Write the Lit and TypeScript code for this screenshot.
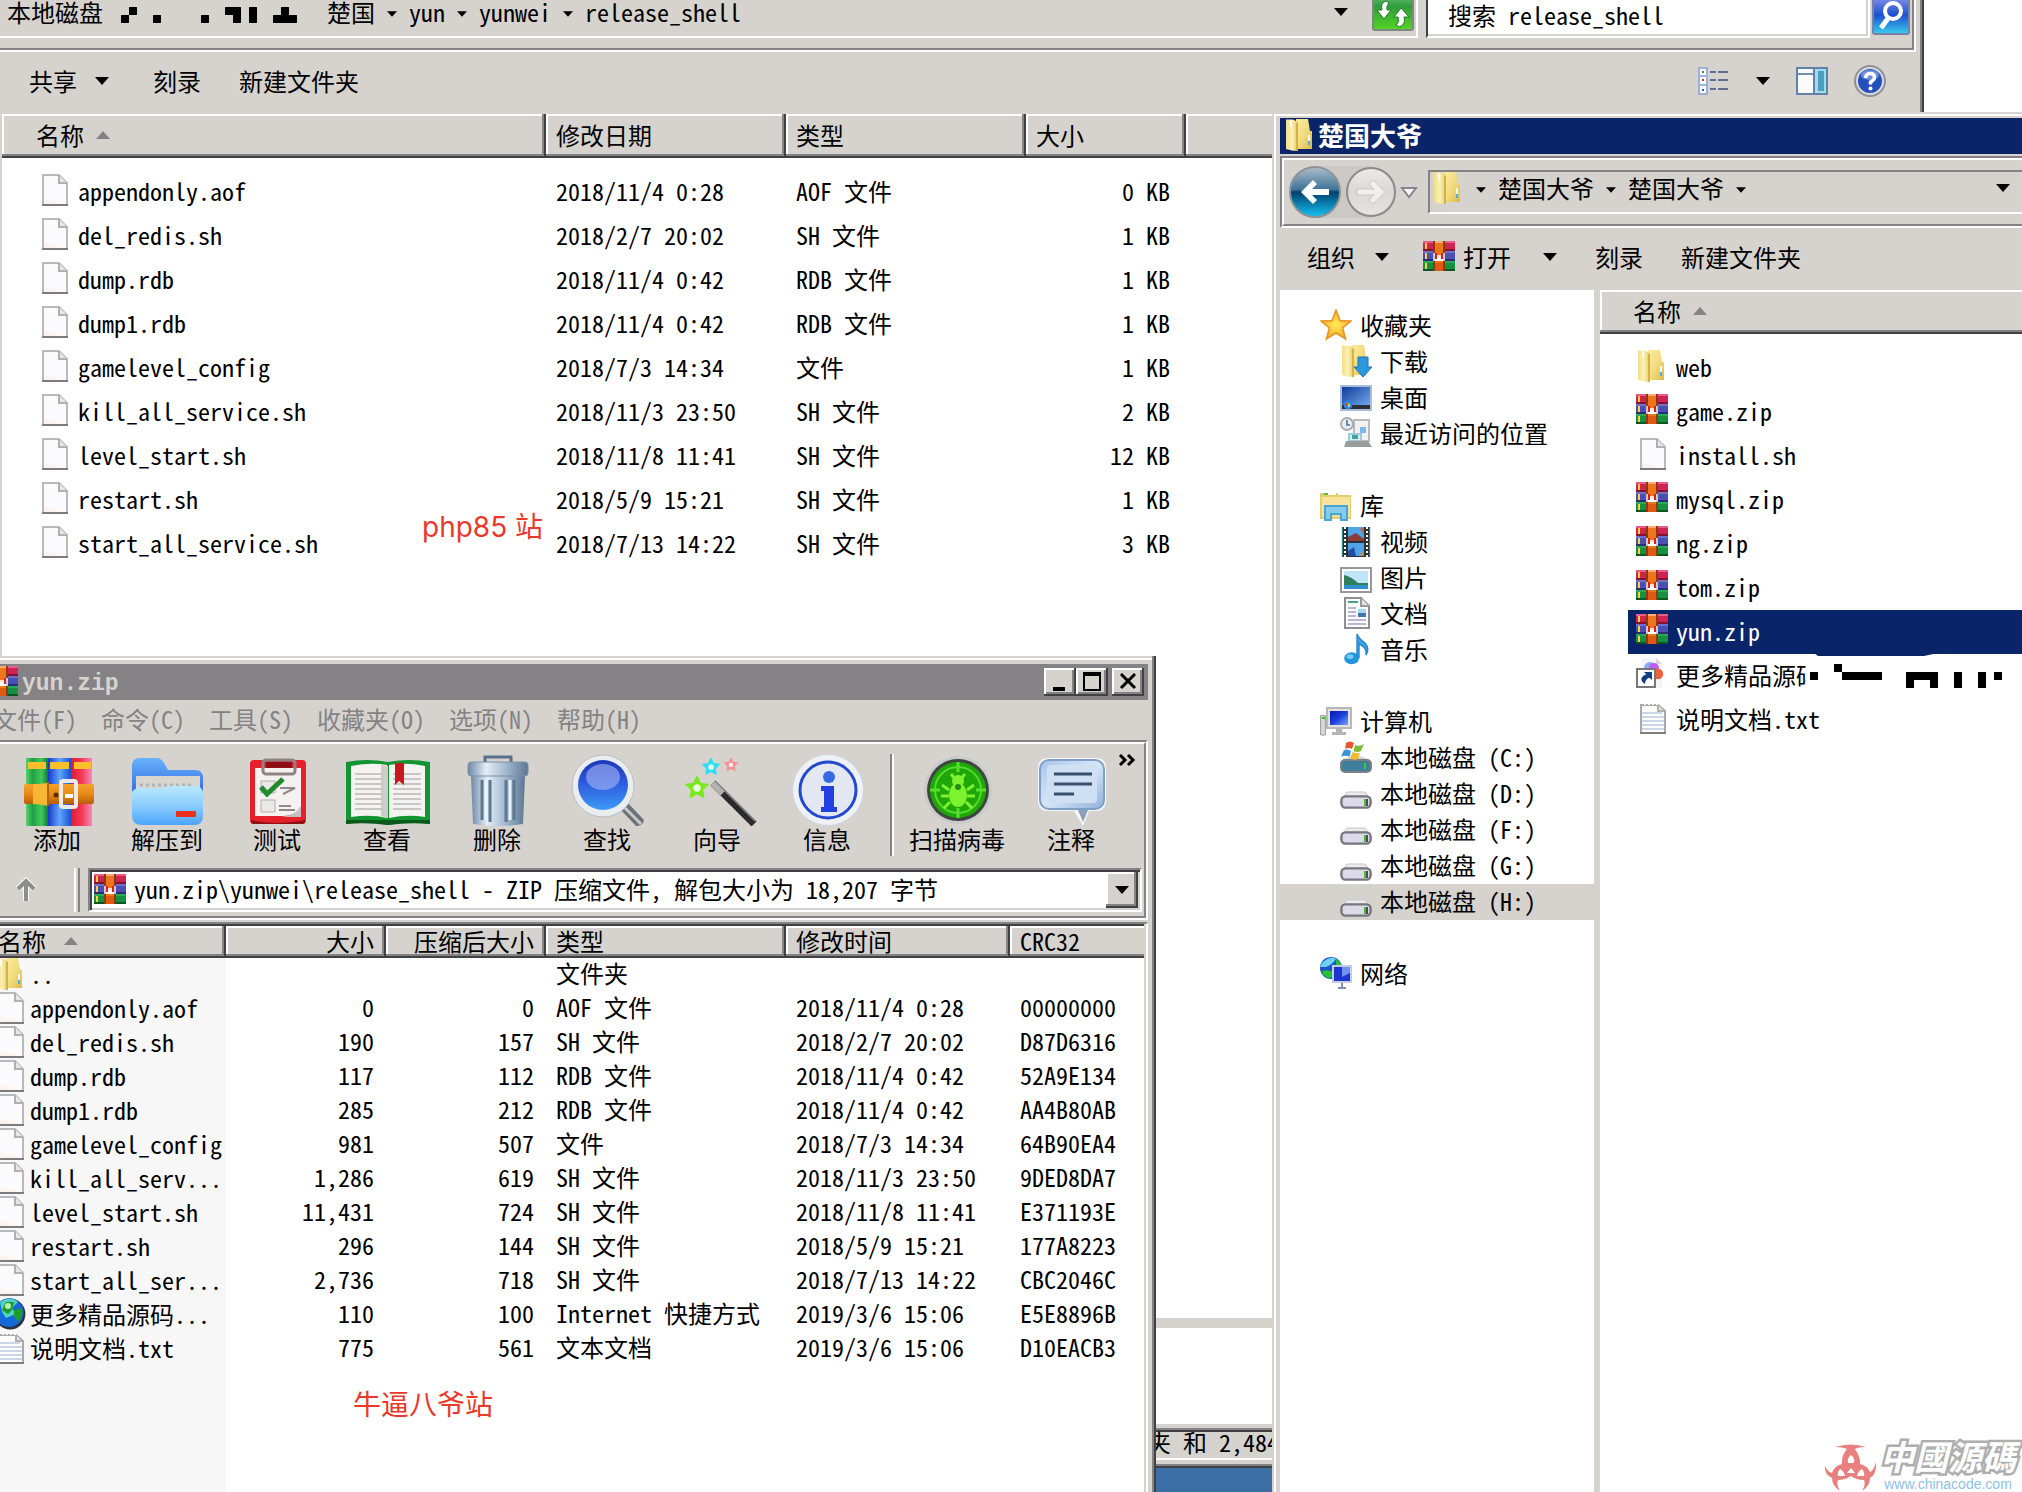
import { LitElement, html, svg, css, nothing } from "lit";
import { customElement } from "lit/decorators.js";
import { classMap } from "lit/directives/class-map.js";

type Art = ReturnType<typeof svg>;

/* ---------- 16-unit icons ---------- */
const page = svg`<path d="M2.5 .5H10.5L14.5 4.5V15.5H2.5Z" fill="#fbfafc" stroke="#b9b9bb"/>
  <path d="M3 12L12 15H3Z" fill="#fdf3ee"/><path d="M10.5 .5V4.5H14.5" fill="#e6e6e8" stroke="#b0b0b3"/><path d="M2 15.5H15" stroke="#7d7d80"/>`;
const icons: Record<string, Art> = {
  page,
  text: svg`<path d="M2.5 1.5H11L14.5 4.5V15.5H2.5Z" fill="#fdfdfb" stroke="#a9a9ab"/>
    <path d="M4 1H11" stroke="#fff" stroke-dasharray="1 1"/><path d="M11 1.5V4.5H14" fill="#e6e6e8" stroke="#b0b0b3"/>
    <path d="M3 5.5H13M3 7.5H14M3 9.5H14M3 11.5H14M3 13.5H14" stroke="#cbd7e9"/><path d="M2 15.5H15" stroke="#7d7d80"/>`,
  folder: svg`<path d="M6 0H12L13 6H14V15H6Z" fill="url(#gFold)"/><path d="M1 .2H4.500L7 1.500V15.900H4.500L1 15Z" fill="url(#gFoldL)"/>
    <path d="M6.500 2V16" stroke="#d3b24a"/><path d="M3.500 .8V4" stroke="#fffdf0"/><path d="M12.500 8V11" stroke="#f4f8fa"/><path d="M12.500 11V13" stroke="#4bb0e6"/>`,
  rar: svg`<g shape-rendering="crispEdges"><path d="M0 0H16V5H0Z" fill="#cf2450"/><path d="M0 0H16V1H0Z" fill="#ea5c8a"/><path d="M0 4H16V5H0Z" fill="#86132e"/>
    <path d="M0 5H16V10H0Z" fill="#4c4fb4"/><path d="M0 5H16V6H0Z" fill="#6c70cc"/><path d="M0 9H16V10H0Z" fill="#2b2c73"/>
    <path d="M0 10H16V15H0Z" fill="#17913f"/><path d="M0 10H16V11H0Z" fill="#27ae55"/><path d="M0 14H16V15H0Z" fill="#0b5525"/>
    <path d="M5 0H11V15H5Z" fill="#8a3a10"/><path d="M6 0H10V15H6Z" fill="#ee7519"/><path d="M6 0H10V1H6Z" fill="#f8ad76"/><path d="M6 11H10V15H6Z" fill="#dc5a12"/>
    <path d="M5 6H6V10H5ZM10 6H11V10H10Z" fill="#cfc9d2"/><path d="M6 8H10V10H6Z" fill="#fff"/><path d="M6 6H7V9H6ZM9 6H10V9H9Z" fill="#cf2318"/><path d="M7 7H9V8H7Z" fill="#fbe3d0"/>
    <path d="M1 1H2V4H1ZM1 6H2V9H1ZM1 11H2V14H1Z" fill="#ffd33a"/></g>`,
  link: svg`<path d="M3 0H10L13 3V15H3Z" fill="#f4f4f8"/><path d="M10 0V3H13" fill="#d3d3d8"/><circle cx="7" cy="5" r="3" fill="#8aa9f4"/><circle cx="9" cy="5" r="2.5" fill="#c45cf0"/>
    <circle cx="11" cy="8" r="2.6" fill="#f2603c"/><path d="M.5 5.5H9.5V14.5H.5Z" fill="#fff" stroke="#77777a"/>
    <path d="M4 7H8V11L6.800 9.900Q4.500 10.500 4.500 13Q2.500 12 2.700 10.300Q3.200 8.600 5.200 8.200Z" fill="#0f3f82"/>`,
  star: svg`<path d="M8 .5L10 5.800L15.500 6L11.300 9.500L12.800 15L8 12L3.200 15L4.700 9.500L.5 6L6 5.800Z" fill="url(#gStar)" stroke="#e7962e" stroke-width=".8"/>`,
  download: svg`<path d="M6 0H12L13 6V15H6Z" fill="url(#gFold)"/><path d="M1 .2H4.500L7 1.500V15.900H4.500L1 15Z" fill="url(#gFoldL)"/><path d="M6.500 2V16" stroke="#d3b24a"/>
    <path d="M9 6H14V11H16L11.500 16L7 11H9Z" fill="#2c97dc" stroke="#1b77bd" stroke-width=".5"/>`,
  desktop: svg`<path d="M0 2H16V15H0Z" fill="#a9bddb"/><path d="M1 3H15V14H1Z" fill="url(#gDesk)"/><path d="M1 12H15V14H1Z" fill="#2c3138"/><circle cx="4" cy="12" r="2.200" fill="#2f86e0"/>
    <path d="M3 11H4V12H3Z" fill="#f04a2a"/><path d="M4 11H5V12H4Z" fill="#7fce3f"/><path d="M4 12H5V13H4Z" fill="#fbd13c"/>`,
  recent: svg`<path d="M7 1.500H14.500V12H7Z" fill="#f2f2f4" stroke="#b9babd"/><path d="M10 5H13V8H10Z" fill="#79b9ee"/><path d="M4.500 8.500H10.500V12H4.500Z" fill="#d5eef3" stroke="#9ccada"/><path d="M6 9H9V11H6Z" fill="#3aa5a0"/>
    <path d="M3 12H14L16 15H2Z" fill="#9b9c9e"/><circle cx="3.500" cy="3.500" r="3" fill="#e9eef4" stroke="#a9adb3"/><path d="M3.500 1.500V4H5" stroke="#55708f" stroke-width=".8" fill="none"/>`,
  library: svg`<path d="M0 2H9V3H15.500V15H0Z" fill="#e7cc6c"/><path d="M1 4H15V14H1Z" fill="#f6e49c"/><path d="M4 2.500H8" stroke="#fff"/><path d="M2 2.500H4" stroke="#54c52f"/>
    <path d="M2.500 8.500H13.500V15.500H10.500V12.500H5.500V15.500H2.500Z" fill="#86cbec" stroke="#49a5d3"/>`,
  video: svg`<path d="M1 1H15V16H1Z" fill="#2a3236"/><path d="M4 1H12V8H4ZM4 9H12V15.500H4Z" fill="#4fa5e8"/><path d="M4 6L8 4L12 7V8H4Z" fill="#8c3b3b"/><path d="M10 2L12 1V5Z" fill="#c7653c"/>
    <path d="M4 15.500V13L7 11L8 15.500Z" fill="#244f9e"/><path d="M10 15.500L12 12V15.500Z" fill="#d18a3c"/><path d="M2.500 1V16M13.500 1V16" stroke="#fff" stroke-dasharray="1 1"/><path d="M1.200 1V16M14.800 1V16" stroke="#3a7e86" stroke-width=".6"/>`,
  picture: svg`<path d="M.5 3.500H15.500V15.500H.5Z" fill="#fff" stroke="#97989b"/><path d="M2 5H14V14H2Z" fill="#bfe4fa"/><path d="M2 7Q6 8 9 11H14V12H2Z" fill="#2e7f5c"/><path d="M2 12H14V14H2Z" fill="#2f8fce"/>`,
  doc: svg`<path d="M2.500 .5H10.500L14.500 4.500V15.500H2.500Z" fill="#fdfdfe" stroke="#8e8f92"/><path d="M10.500 .5V4.500H14.500" fill="#e4e4e6" stroke="#9a9a9d"/><path d="M4 2.500H9" stroke="#4d9c9c"/>
    <path d="M4 5.500H8M4 7.500H8M4 9.500H8M4 11.500H13M4 13.500H13" stroke="#b9b5d6"/><path d="M9 6H13V10H9Z" fill="#3f78b4"/><path d="M9 6H13V8H9Z" fill="#a5d6ef"/>`,
  music: svg`<path d="M8.500 12V.5Q9.500 3 12.500 5Q15 8 13 11Q13.500 7 9.500 5.500V12.500" fill="#3fa2e3" stroke="#2487cc" stroke-width=".7"/><ellipse cx="5.800" cy="12.600" rx="3.700" ry="3" fill="#2196dc"/><ellipse cx="5" cy="11.800" rx="1.800" ry="1.200" fill="#7cc6f0"/>`,
  computer: svg`<path d="M.3 5.300H2.700V15H.3Z" fill="#d8d8d8" stroke="#9a9a9a" stroke-width=".5"/><path d="M1 6.500H2.500" stroke="#39c522"/><path d="M3.500 1.500H15.500V11.500H3.500Z" fill="#e2e2e2" stroke="#b8b8b8"/>
    <path d="M5 3H14V10H5Z" fill="url(#gScreen)"/><path d="M8 12H11V13.500H13V15H6V13.500H8Z" fill="#b5b5b5"/>`,
  winDrive: svg`<path d="M2 9Q8 6 14 9L16 11H0Z" fill="#cfd4d8"/><rect x=".5" y="9.500" width="15" height="6" rx="2" fill="#3f7f9e" stroke="#7d8085"/><path d="M12.500 11V14" stroke="#46d025"/>
    <path d="M3 1Q5-.5 7 1L6 4Q4 3 2.500 4Z" fill="#e8552a"/><path d="M7.500 2Q10 3 12 1.500L10.500 5Q8.500 6 6.800 5Z" fill="#7fbd3a"/><path d="M2 4.500Q4 3.800 5.500 5L4.800 7.800Q3 7 .5 7.800Z" fill="#3c93dd"/><path d="M6.300 5.500Q8 6.500 10 6L9 9Q7 10 5 8.500Z" fill="#f5bb2e"/>`,
  drive: svg`<path d="M3.500 7.500H12.500L15 11H1Z" fill="#ebebee" stroke="#c7c7cb" stroke-width=".5"/><rect x=".7" y="9.700" width="14.600" height="5.600" rx="2" fill="#dbdae8" stroke="#77757c" stroke-width="1.200"/>
    <path d="M12 11H13V14.500H12Z" fill="#3fc421"/><path d="M13 11H14V14.500H13Z" fill="#4d4b58"/>`,
  network: svg`<circle cx="5.500" cy="5.500" r="5.500" fill="#1a54cf"/><path d="M1 3Q5-1 8 1Q6 4 3 5Q1 5 0 5Z" fill="#6fd2f5"/><path d="M1 7Q5 6 7 8Q6 11 4 10.500Q1 9 1 7ZM8 1Q11 3 10.500 5L8 4Z" fill="#27c22f"/>
    <path d="M6.500 4.500H15.500V12.500H6.500Z" fill="#1e35d0" stroke="#c6cbe0"/><path d="M11 5H15V8L11 10Z" fill="#6e91f2"/><path d="M11 13V15M9 15.500H13" stroke="#7f8fb3"/>`,
  globe: svg`<circle cx="8" cy="8" r="7.700" fill="#2f2f38"/><circle cx="7.600" cy="7.300" r="7.200" fill="#1468d8"/><path d="M3 2Q8-1.500 12 2L9 5L11 8L6 10L4 7Z" fill="#4fd0c0"/><path d="M6 2H10L9 6L7 8L4 6ZM10 6L14 5Q15 9 12 12L10 9Z" fill="#1c9c2a"/><circle cx="7" cy="4" r="1.500" fill="#baf0b0"/>`,
};
const ico = (name: string) => html`<svg class="ico" viewBox="0 0 16 16" aria-hidden="true">${icons[name]}</svg>`;

const tri = (small = false) =>
  html`<svg class=${small ? "tri small" : "tri"} viewBox="0 0 14 8" aria-hidden="true"><path d="M0 0H14L7 8Z"/></svg>`;
const sortMark = html`<svg class="tri sort" viewBox="0 0 14 8" aria-hidden="true"><path d="M0 8H14L7 0Z"/></svg>`;

/* ---------- archive toolbar pictures ---------- */
const starAt = (x: number, y: number, r: number, fill: string) => {
  const pts = Array.from({ length: 10 }, (_, i) => {
    const a = (Math.PI / 5) * i - Math.PI / 2;
    const q = i % 2 ? r * 0.5 : r;
    return `${(x + q * Math.cos(a)).toFixed(1)},${(y + q * Math.sin(a)).toFixed(1)}`;
  }).join(" ");
  return svg`<polygon points=${pts} fill=${fill}/><circle cx=${x} cy=${y} r=${r / 3.5} fill="#fff" opacity=".85"/>`;
};
const tools: { label: string; art: Art; wide?: boolean }[] = [
  { label: "添加", art: svg`<path d="M13 4H35V72H13Z" fill="url(#gGreen)"/><path d="M35 4H58V72H35Z" fill="url(#gBlue)"/><path d="M58 4H79V72H58Z" fill="url(#gRed)"/>
    <path d="M15 8H33V15H15ZM37 8H56V15H37ZM61 8H78V15H61Z" fill="#fcbf2c"/><rect x="11" y="30" width="70" height="20" rx="2" fill="url(#gBelt)"/>
    <path d="M20 30Q32 30 36 28V52Q26 50 20 50Z" fill="#f7b733"/><path d="M35 28V52" stroke="#b5640c" stroke-width="2"/><rect x="48" y="27" width="15" height="26" rx="2" fill="none" stroke="#ece9e6" stroke-width="4"/><path d="M52 42H60" stroke="#fff" stroke-width="4"/><circle cx="43" cy="41" r="2.500" fill="#5c2a05"/>` },
  { label: "解压到", art: svg`<path d="M9 12Q9 4 17 4H34Q38 4 41 9L45 16H72Q80 16 80 24V44H9Z" fill="url(#gFoldBlue)"/><path d="M13 22H77V44H13Z" fill="#d8d5d0"/><path d="M17 31H70" stroke="#aeb4ba" stroke-width="3" stroke-dasharray="3 3"/>
    <path d="M9 38Q11 34 18 34H40L46 32H72Q80 32 80 40V62Q80 71 71 71H19Q9 71 9 62Z" fill="url(#gFoldFront)"/><rect x="53" y="57" width="20" height="6" rx="1" fill="#e8301a"/>` },
  { label: "测试", art: svg`<rect x="17" y="6" width="56" height="64" rx="4" fill="#e5202a"/><path d="M18 66Q45 72 72 66V68Q72 70 68 70H22Q18 70 18 68Z" fill="#8e1015"/><path d="M22 14H68V54Q62 62 50 62H22Z" fill="#f4f2f1"/>
    <path d="M68 52Q60 64 46 63H68Z" fill="#c5c1bf"/><path d="M33 11H59" stroke="#8e1015" stroke-width="6"/><rect x="30" y="6" width="32" height="14" rx="3" fill="none" stroke="#8d8284" stroke-width="3"/>
    <path d="M28 27H42V39H28ZM28 46H42V58H28Z" fill="#ece8e6" stroke="#b2adab"/><path d="M28 33L34 40L50 25" fill="none" stroke="#1f8b2b" stroke-width="5"/><path d="M47 34H62L50 40M46 52H58M46 56H62" fill="none" stroke="#93888c" stroke-width="2"/>` },
  { label: "查看", art: svg`<path d="M3 8Q24 4 45 8Q66 4 87 8V70Q66 67 45 71Q24 67 3 70Z" fill="#129433"/><path d="M3 66H87V70Q66 68 45 71Q24 68 3 70Z" fill="#075a18"/><path d="M8 12Q28 8 44 11V64Q28 60 8 63Z" fill="#f5f3f1"/><path d="M46 11Q64 8 82 12V63Q64 60 46 64Z" fill="#f5f3f1"/>
    <path d="M38 11L45 12V64L38 62Z" fill="#cfccca"/><path d="M12 20H40M12 25H40M12 30H40M12 35H40M12 40H40M12 45H40M12 50H40M12 55H40M50 20H78M50 25H78M50 30H78M50 35H78M50 40H78M50 45H78M50 50H78M50 55H78" stroke="#c9c5c3" stroke-width="2"/><path d="M52 9H61V31L56 27L52 31Z" fill="#c8171d"/>` },
  { label: "删除", art: svg`<path d="M32 8V3H58V8" fill="none" stroke="#5a6f89" stroke-width="3"/><path d="M18 22H72L70 70Q45 74 20 70Z" fill="url(#gSteel)"/><path d="M29 26V66M37 26V68M53 26V68M61 26V66" stroke="#5d7893" stroke-width="3"/><path d="M33 26V66M57 26V66" stroke="#e9f1f8" stroke-width="3"/><rect x="15" y="8" width="60" height="14" rx="3" fill="url(#gSteel)" stroke="#7a90a8"/>` },
  { label: "查找", art: svg`<path d="M56 54L64 48L81 66Q80 72 73 72Z" fill="#6e7278"/><path d="M62 54L78 70" stroke="#c6c9ce" stroke-width="3"/><circle cx="40" cy="32" r="31" fill="#e9edf0" stroke="#b7bcc0"/><circle cx="40" cy="31" r="25" fill="url(#gLens)"/><ellipse cx="40" cy="23" rx="17" ry="13" fill="#a9b8f6" opacity=".6"/>` },
  { label: "向导", art: svg`<path d="M40 29L81 70" stroke="#2b2b2e" stroke-width="7"/><path d="M40 29L50 39" stroke="#b3b1af" stroke-width="7"/><path d="M42 27L82 67" stroke="#8b8b8e" stroke-width="1.500"/>${starAt(24, 34, 13, "#7ae81a")}${starAt(38, 13, 10, "#29e0f2")}${starAt(58, 11, 8, "#f79090")}` },
  { label: "信息", art: svg`<circle cx="45" cy="36" r="35.500" fill="#eef1f6" stroke="#cfd5de"/><circle cx="45" cy="36" r="28" fill="#e3e7f1" stroke="#2448cf" stroke-width="3"/><circle cx="46" cy="23" r="6" fill="#3568e4"/><path d="M38 32H51V53H54V58H38V53H41V37H38Z" fill="#2341e0"/>` },
  { label: "扫描病毒", wide: true, art: svg`<circle cx="45" cy="36" r="34" fill="#c9cacb"/><circle cx="45" cy="36" r="31" fill="#3f4541"/><circle cx="45" cy="36" r="28" fill="#1fa707"/><circle cx="45" cy="36" r="23" fill="none" stroke="#55d92e" stroke-width="2"/>
    <path d="M45 8V18M45 54V64M17 36H27M63 36H73" stroke="#55e02c" stroke-width="3"/><ellipse cx="45" cy="41" rx="9" ry="12" fill="#7df22f"/><circle cx="45" cy="27" r="6" fill="#7df22f"/><path d="M38 20L42 25M52 20L48 25M36 36L29 31M54 36L61 31M36 42H28M54 42H62M37 48L31 54M53 48L59 54" stroke="#7df22f" stroke-width="3"/><circle cx="45" cy="33" r="3" fill="#238c10"/>` },
  { label: "注释", art: svg`<path d="M21 4H69Q79 4 79 14V46Q79 57 69 57H62L56 72L47 57H21Q11 57 11 46V14Q11 4 21 4Z" fill="#f4f7fa"/><rect x="13" y="6" width="64" height="49" rx="9" fill="url(#gNote)" stroke="#7f9fc6" stroke-width="2"/><path d="M51 56L56 68L61 56Z" fill="#8ba0b8"/><rect x="20" y="11" width="50" height="38" rx="4" fill="#cfdff4"/><path d="M27 20H65M27 30H65M27 40H47" stroke="#38506e" stroke-width="3"/>` },
];

/* ---------- data ---------- */
const files = [
  ["appendonly.aof", "2018/11/4 0:28", "AOF 文件", "0 KB"],
  ["del_redis.sh", "2018/2/7 20:02", "SH 文件", "1 KB"],
  ["dump.rdb", "2018/11/4 0:42", "RDB 文件", "1 KB"],
  ["dump1.rdb", "2018/11/4 0:42", "RDB 文件", "1 KB"],
  ["gamelevel_config", "2018/7/3 14:34", "文件", "1 KB"],
  ["kill_all_service.sh", "2018/11/3 23:50", "SH 文件", "2 KB"],
  ["level_start.sh", "2018/11/8 11:41", "SH 文件", "12 KB"],
  ["restart.sh", "2018/5/9 15:21", "SH 文件", "1 KB"],
  ["start_all_service.sh", "2018/7/13 14:22", "SH 文件", "3 KB"],
];
const archive = [
  ["folder", "..", "", "", "文件夹", "", ""],
  ["page", "appendonly.aof", "0", "0", "AOF 文件", "2018/11/4 0:28", "00000000"],
  ["page", "del_redis.sh", "190", "157", "SH 文件", "2018/2/7 20:02", "D87D6316"],
  ["page", "dump.rdb", "117", "112", "RDB 文件", "2018/11/4 0:42", "52A9E134"],
  ["page", "dump1.rdb", "285", "212", "RDB 文件", "2018/11/4 0:42", "AA4B80AB"],
  ["page", "gamelevel_config", "981", "507", "文件", "2018/7/3 14:34", "64B90EA4"],
  ["page", "kill_all_serv...", "1,286", "619", "SH 文件", "2018/11/3 23:50", "9DED8DA7"],
  ["page", "level_start.sh", "11,431", "724", "SH 文件", "2018/11/8 11:41", "E371193E"],
  ["page", "restart.sh", "296", "144", "SH 文件", "2018/5/9 15:21", "177A8223"],
  ["page", "start_all_ser...", "2,736", "718", "SH 文件", "2018/7/13 14:22", "CBC2046C"],
  ["globe", "更多精品源码...", "110", "100", "Internet 快捷方式", "2019/3/6 15:06", "E5E8896B"],
  ["text", "说明文档.txt", "775", "561", "文本文档", "2019/3/6 15:06", "D10EACB3"],
];
const groups: { icon: string; label: string; items: [string, string][] }[] = [
  { icon: "star", label: "收藏夹", items: [["download", "下载"], ["desktop", "桌面"], ["recent", "最近访问的位置"]] },
  { icon: "library", label: "库", items: [["video", "视频"], ["picture", "图片"], ["doc", "文档"], ["music", "音乐"]] },
  { icon: "computer", label: "计算机", items: [["winDrive", "本地磁盘 (C:)"], ["drive", "本地磁盘 (D:)"], ["drive", "本地磁盘 (F:)"], ["drive", "本地磁盘 (G:)"], ["drive", "本地磁盘 (H:)"]] },
  { icon: "network", label: "网络", items: [] },
];
const folderList = [
  ["folder", "web"], ["rar", "game.zip"], ["page", "install.sh"], ["rar", "mysql.zip"], ["rar", "ng.zip"],
  ["rar", "tom.zip"], ["rar", "yun.zip"], ["link", "更多精品源码"], ["text", "说明文档.txt"],
];

@customElement("app-root")
export class AppRoot extends LitElement {
  static styles = css`
    :host {
      display: block; position: relative; height: 100vh; overflow: hidden;
      background: linear-gradient(#fff 0 calc(100% - 24px), #3a6ea5 0);
      font: 24px/28px "Noto Sans CJK SC", "Liberation Mono", monospace;
      font-feature-settings: "hwid" 1; font-variant-ligatures: none;
      color: #000; --face: #d6d3ce; --mid: #848284; --dark: #424142; --navy: #0a246a;
    }
    * { box-sizing: border-box; }
    button, input, select { font: inherit; font-feature-settings: inherit; font-variant-ligatures: none; color: inherit; background: none; border: 0; padding: 0; margin: 0; border-radius: 0; white-space: nowrap; outline: 0; }
    a { color: inherit; text-decoration: none; }
    svg { display: block; flex: none; }
    .defs { position: absolute; width: 0; height: 0; }
    .ico { width: 32px; height: 32px; }
    .tri { width: 14px; height: 8px; }
    .tri.small { width: 10px; height: 6px; margin-top: 4px; }
    .tri.sort { fill: var(--mid); }
    .win { position: absolute; background: var(--face); display: flex; flex-direction: column; overflow: hidden; }
    .etch { flex: none; border: 2px solid; border-color: var(--mid) #fff #fff var(--mid); }
    .etchIn { border: 2px solid; border-color: #fff var(--mid) var(--mid) #fff; }

    table { border-collapse: separate; border-spacing: 0; table-layout: fixed; width: 100%; }
    th, td { padding: 0 12px 0 10px; text-align: left; font-weight: 400; white-space: nowrap; }
    th { background: var(--face); box-shadow: inset -2px -2px var(--dark), inset -4px -4px var(--mid), inset 2px 2px #fff; }
    th.last { box-shadow: inset 0 -2px var(--dark), inset 0 -4px var(--mid), inset 2px 2px #fff; }
    .num { text-align: right; }
    .cell { display: flex; align-items: center; }
    .files th { height: 44px; padding-bottom: 2px; }
    .files td { height: 44px; padding-bottom: 2px; }
    .files td:first-child { padding-bottom: 0; }
    .files .cell { gap: 8px; height: 44px; padding-bottom: 2px; }
    .files .cell .ico { margin-bottom: 2px; }
    .files th:first-child .cell { gap: 12px; height: 40px; padding-bottom: 0; }
    .files .spacer td { height: 12px; padding: 0; }

    .nav { display: flex; align-items: center; height: 68px; }
    .crumbs { flex: 1; display: flex; align-items: center; height: 44px; border: 2px solid; border-color: var(--mid) #fff #fff var(--mid); padding-bottom: 8px; min-width: 0; }
    .step { width: 34px; display: flex; justify-content: center; }
    .push { margin-left: auto; }
    .bar { flex: none; display: flex; align-items: center; height: 62px; padding-bottom: 4px; }
    .bar button { display: flex; align-items: center; }

    .back { left: 0; right: 98px; top: -20px; bottom: 24px; padding-right: 8px; box-shadow: inset -2px -2px var(--dark), inset -4px -4px var(--mid); }
    .back .etch, .back .etchIn { border-left: 0; }
    .back .nav { gap: 8px; padding-right: 2px; }
    .back .crumbs { border-left: 0; padding-left: 7px; }
    .back .refresh { margin: 0 2px 0 24px; }
    .search { display: flex; align-items: center; flex: none; width: 484px; height: 44px; }
    .search input { flex: 1; min-width: 0; height: 44px; background: #fff; border: 2px solid; border-color: var(--mid) #fff #fff var(--dark); box-shadow: inset -2px -2px var(--face); padding: 0 20px 4px; }
    .search button { width: 40px; padding-left: 2px; }
    .back .bar { padding: 0 30px 4px 29px; gap: 38px; }
    .back .bar .share { gap: 18px; margin-right: 6px; }
    .back .bar .icons { display: flex; align-items: center; margin-left: auto; gap: 26px; }
    .backBody { flex: 1; background: #fff; border-left: 2px solid var(--face); min-height: 0; overflow: hidden; }
    .back .files th:first-child { padding-left: 34px; }
    .back .files td:first-child { padding-left: 36px; }
    .back .files .num { padding-right: 16px; }
    .split { flex: none; height: 10px; }
    .details { flex: none; height: 96px; background: #fff; }
    .status { flex: none; margin: 4px 0; border-top: 2px solid var(--mid); border-bottom: 2px solid #fff; box-shadow: inset 0 2px var(--dark); height: 32px; padding-left: 1147px; white-space: nowrap; line-height: 24px; }
    .foot { flex: none; height: 4px; }

    .front { left: 1272px; right: 0; top: 112px; bottom: 0; padding: 6px 0 0 8px; box-shadow: inset 2px 2px var(--face), inset 4px 4px #fff; }
    .front .title { flex: none; display: flex; align-items: center; gap: 2px; height: 36px; margin-bottom: 2px; padding: 0 0 2px 4px; background: var(--navy); color: #fff; font-weight: 700; font-size: 26px; }
    .front .etch, .front .etchIn { border-right: 0; }
    .front .nav { padding-left: 4px; }
    .front .crumbs { border-right: 0; margin-left: 10px; padding-left: 2px; }
    .front .push { margin-right: 12px; }
    .front .bar { padding-left: 27px; }
    .front .bar button { gap: 20px; }
    .front .bar .open { gap: 8px; margin-left: 34px; }
    .front .bar .more { margin-left: 32px; }
    .front .bar .burn { margin: 0 38px; }
    .panes { flex: 1; display: flex; min-height: 0; }
    .tree { flex: none; width: 314px; background: #fff; padding-top: 18px; }
    .tree ul { list-style: none; margin: 0 0 36px; padding: 0; }
    .tree a { display: flex; align-items: center; gap: 8px; height: 36px; padding: 0 0 2px 40px; }
    .tree .sub a { padding-left: 60px; }
    .tree .sub.sel a { background: var(--face); }
    .list { flex: 1; min-width: 0; margin-left: 6px; background: #fff; overflow: hidden; }
    .list th:first-child { padding-left: 33px; }
    .list th .cell { padding-left: 0; }
    .list td { padding: 0 0 0 28px; }
    .list td .cell { padding-left: 8px; }
    .list .sel .cell { background: var(--navy); color: #fff; }
    .clip { width: 130px; overflow: hidden; }
    .clip + svg { margin-left: -12px; }

    .rar { left: -14px; top: 656px; bottom: 0; width: 1170px; padding: 8px 8px 0 0; box-shadow: inset -2px 0 var(--dark), inset -4px 0 var(--mid), inset 0 2px var(--face), inset 0 4px #fff; }
    .rar .title { flex: none; display: flex; align-items: center; gap: 4px; height: 36px; background: var(--mid); color: var(--face); font: 700 23px/28px "Liberation Mono", monospace; padding-right: 4px; }
    .rar .title span { padding-top: 4px; }
    .caps { display: flex; margin-left: auto; }
    .caps button { width: 32px; height: 28px; background: var(--face); box-shadow: inset -2px -2px var(--dark), inset 2px 2px #fff, inset -4px -4px var(--mid); }
    .caps button:last-child { margin-left: 4px; }
    .menu { flex: none; display: flex; align-items: center; gap: 24px; height: 40px; padding: 0 0 2px 7px; color: var(--mid); }
    .rar .etch, .rar .etchIn { border-left: 0; }
    .tools { display: flex; align-items: flex-start; height: 120px; padding: 10px 0 0 16px; }
    .tools button { flex: none; width: 110px; display: flex; flex-direction: column; align-items: center; line-height: 26px; }
    .tools .wide { width: 118px; margin-left: 4px; }
    .tools i { flex: none; width: 4px; height: 102px; margin: 0 0 0 8px; background: linear-gradient(to right, var(--mid) 50%, #fff 50%); }
    .tools .chev { width: 18px; margin-left: -8px; }
    .path { display: flex; align-items: center; height: 52px; padding-right: 2px; }
    .path .up { padding-left: 28px; }
    .grip { width: 6px; height: 44px; margin: 0 8px 0 36px; background: linear-gradient(to right, #fff 2px, var(--face) 2px 4px, var(--mid) 4px); }
    .combo { flex: 1; display: flex; align-items: center; height: 44px; background: #fff; border: 2px solid; border-color: var(--mid) #fff #fff var(--mid); box-shadow: inset 2px 2px var(--dark), inset -2px -2px var(--face); position: relative; padding-left: 4px; }
    .combo select { flex: 1; appearance: none; padding: 0 0 2px 8px; height: 36px; }
    .combo .drop { position: absolute; right: 2px; top: 2px; width: 32px; height: 36px; background: var(--face); box-shadow: inset -2px -2px var(--dark), inset -4px -4px var(--mid), inset 2px 2px #fff; display: grid; place-items: center; pointer-events: none; }
    .grid { flex: 1; min-height: 0; margin-top: 2px; border-top: 2px solid var(--mid); border-right: 2px solid #fff; box-shadow: inset -2px 0 var(--face); padding-right: 2px; background: linear-gradient(to right, #f7f7f7 240px, #fff 240px); }
    .grid table { border-top: 2px solid var(--dark); }
    .grid th { height: 32px; padding-bottom: 2px; }
    .grid td { height: 34px; padding-bottom: 4px; }
    .grid th:first-child { padding-left: 12px; }
    .grid td:first-child { padding: 0 0 0 8px; }
    .grid td .cell { gap: 4px; height: 34px; padding-bottom: 2px; }
    .grid th .cell { gap: 18px; }

    .note { position: absolute; color: #e8392b; font-size: 28px; line-height: 32px; font-family: Inter, "Noto Sans CJK SC", sans-serif; font-feature-settings: normal; white-space: nowrap; }
    .noteA { left: 422px; top: 511px; }
    .noteB { left: 353px; top: 1389px; }
    .mark { position: absolute; right: 6px; bottom: 0; display: flex; align-items: flex-end; gap: 2px; }
    .mark b { display: block; font: italic 700 34px/40px "Noto Sans CJK TC", sans-serif; color: #fff; -webkit-text-stroke: 5px #aeaeae; paint-order: stroke fill; }
    .mark span { display: block; font: 14px/16px "Liberation Sans", sans-serif; color: #8fc0e6; text-align: center; }
  `;

  private defs() {
    return html`<svg class="defs" aria-hidden="true"><defs>
      <linearGradient id="gFold" x2="1" y2="1"><stop stop-color="#fbeb9e"/><stop offset=".5" stop-color="#f3dc80"/><stop offset="1" stop-color="#dcba48"/></linearGradient>
      <linearGradient id="gFoldL" x2="1"><stop stop-color="#f2df87"/><stop offset=".5" stop-color="#fbf0b4"/><stop offset="1" stop-color="#e3c763"/></linearGradient>
      <radialGradient id="gStar"><stop stop-color="#ffee58"/><stop offset="1" stop-color="#f9a825"/></radialGradient>
      <linearGradient id="gDesk" x2="1" y2="1"><stop stop-color="#0f3a9a"/><stop offset="1" stop-color="#7cb2f0"/></linearGradient>
      <linearGradient id="gScreen" x2="1" y2="1"><stop stop-color="#0a14a8"/><stop offset=".5" stop-color="#1c3fe0"/><stop offset="1" stop-color="#7da4f4"/></linearGradient>
      <linearGradient id="gGreen"><stop stop-color="#56d36a"/><stop offset=".3" stop-color="#22a043"/><stop offset=".7" stop-color="#3fc95d"/><stop offset="1" stop-color="#157a2c"/></linearGradient>
      <linearGradient id="gBlue"><stop stop-color="#1738c9"/><stop offset=".5" stop-color="#5fa5fb"/><stop offset="1" stop-color="#1b4fd6"/></linearGradient>
      <linearGradient id="gRed"><stop stop-color="#e01a35"/><stop offset=".5" stop-color="#f23a52"/><stop offset="1" stop-color="#fb86bb"/></linearGradient>
      <linearGradient id="gBelt" x2="0" y2="1"><stop stop-color="#f2a129"/><stop offset=".5" stop-color="#e98a17"/><stop offset="1" stop-color="#b85d08"/></linearGradient>
      <linearGradient id="gFoldBlue" x2="0" y2="1"><stop stop-color="#68b2fb"/><stop offset="1" stop-color="#2e62e0"/></linearGradient>
      <linearGradient id="gFoldFront" x2="0" y2="1"><stop stop-color="#b9e8fd"/><stop offset=".5" stop-color="#8ccdfd"/><stop offset="1" stop-color="#4ba5fb"/></linearGradient>
      <linearGradient id="gSteel"><stop stop-color="#6e88a5"/><stop offset=".3" stop-color="#e3edf6"/><stop offset=".6" stop-color="#a9bed3"/><stop offset="1" stop-color="#5d7793"/></linearGradient>
      <linearGradient id="gLens" x2="0" y2="1"><stop stop-color="#1c36b8"/><stop offset=".5" stop-color="#2f5fe0"/><stop offset="1" stop-color="#3d9af5"/></linearGradient>
      <linearGradient id="gNote" x2="1" y2="1"><stop stop-color="#a9c5ea"/><stop offset=".5" stop-color="#d7e6f8"/><stop offset="1" stop-color="#8fb0da"/></linearGradient>
      <linearGradient id="gBack" x2="0" y2="1"><stop stop-color="#aebecb"/><stop offset=".45" stop-color="#3f7398"/><stop offset=".5" stop-color="#04406e"/><stop offset="1" stop-color="#13c4f4"/></linearGradient>
      <linearGradient id="gFwd" x2="0" y2="1"><stop stop-color="#eceae9"/><stop offset=".5" stop-color="#dad7d5"/><stop offset="1" stop-color="#e6e3e1"/></linearGradient>
      <linearGradient id="gGo" x2="0" y2="1"><stop stop-color="#8fce9a"/><stop offset=".4" stop-color="#2f9c3b"/><stop offset="1" stop-color="#55d622"/></linearGradient>
      <linearGradient id="gFind" x2="0" y2="1"><stop stop-color="#8d96ea"/><stop offset=".5" stop-color="#1c50cf"/><stop offset="1" stop-color="#39d0ee"/></linearGradient>
    </defs></svg>`;
  }

  private backWindow() {
    return html`<section class="win back">
      <div class="etch"><div class="etchIn nav">
        <div class="crumbs">
          <button>本地磁盘</button>
          <svg width="224" height="38" viewBox="0 0 224 38" aria-hidden="true"><path d="M18 22h8v-8h8v8h-8v8h-8zM50 22h8v8h-8zM98 22h8v8h-8zM122 14h16v16h-8v-8h-8zM146 14h8v16h-8zM178 14h8v8h8v8h-24v-8h8z"/></svg>
          <button>楚国</button><span class="step">${tri(true)}</span>
          <button>yun</button><span class="step">${tri(true)}</span>
          <button>yunwei</button><span class="step">${tri(true)}</span>
          <button>release_shell</button>
          <span class="push">${tri()}</span>
          <button class="refresh" aria-label="刷新"><svg width="42" height="38" viewBox="0 0 42 38"><rect x="1" y="-3" width="40" height="40" rx="2" fill="url(#gGo)" stroke="#7c8a7c" stroke-width="2"/><path d="M14 8Q8 10 10 17H5L12 26L19 17H15Q14 13 17 10ZM28 34Q34 31 32 24H37L29 15L22 24H26Q28 29 24 32Z" fill="#fff" stroke="#237a26"/></svg></button>
        </div>
        <div class="search">
          <input type="text" aria-label="搜索" value="搜索 release_shell">
          <button aria-label="开始搜索"><svg width="38" height="42" viewBox="0 0 38 42"><rect x="1" y="1" width="36" height="38" rx="2" fill="url(#gFind)" stroke="#7780a8" stroke-width="2"/><path d="M17 22L9 33" stroke="#fff" stroke-width="5"/><circle cx="21" cy="16" r="8" fill="none" stroke="#fff" stroke-width="4"/></svg></button>
        </div>
      </div></div>
      <div class="bar">
        <button class="share">共享 ${tri()}</button><button>刻录</button><button>新建文件夹</button>
        <div class="icons">
          <button aria-label="视图"><svg width="32" height="28" viewBox="0 0 16 14"><path d="M.5 .5H4.500V13.500H.5ZM.5 4.500H4.500M.5 9H4.500" fill="#fff" stroke="#9db1d4"/><path d="M2 2H3V3H2Z" fill="#4b8c4b"/><path d="M2 6H3V7H2Z" fill="#e02a1a"/><path d="M2 11H3V12H2Z" fill="#2a5fc8"/><path d="M6 2.500H9M10 2.500H15M6 6.500H9M10 6.500H15M6 11H9M10 11H15" stroke="#5e6f93"/></svg></button>
          <button aria-label="更多视图">${tri()}</button>
          <button aria-label="预览窗格"><svg width="32" height="28" viewBox="0 0 32 28"><path d="M1 1H31V27H1Z" fill="#fbfafd" stroke="#5f83a8" stroke-width="2"/><path d="M1 7H18" stroke="#6d91b5" stroke-width="2"/><path d="M18 2H30V26H18Z" fill="#9fdcec"/><path d="M22 4H28V24H22Z" fill="#4d9dc0"/><path d="M18 1V27" stroke="#5f83a8" stroke-width="2"/></svg></button>
          <button aria-label="帮助"><svg width="32" height="32" viewBox="0 0 32 32"><circle cx="16" cy="16" r="15" fill="#d9d9dc" stroke="#8f9096" stroke-width="2"/><circle cx="16" cy="16" r="12" fill="#2350bd"/><ellipse cx="16" cy="10" rx="9" ry="5" fill="#6d8fdf"/><path d="M11.500 13Q12 8.500 16 8.500Q20.500 8.500 20.500 12.500Q20.500 15 16.500 17V19.500" fill="none" stroke="#fff" stroke-width="3.500"/><circle cx="16.500" cy="23.500" r="2" fill="#fff"/></svg></button>
        </div>
      </div>
      <div class="backBody"><table class="files">
        <colgroup><col width="544"><col width="240"><col width="240"><col width="160"><col></colgroup>
        <thead><tr><th><div class="cell">名称 ${sortMark}</div></th><th>修改日期</th><th>类型</th><th>大小</th><th class="last"></th></tr></thead>
        <tbody><tr class="spacer"><td colspan="5"></td></tr>
        ${files.map(([n, d, t, s]) => html`<tr><td><div class="cell">${ico("page")}<span>${n}</span></div></td><td>${d}</td><td>${t}</td><td class="num">${s}</td><td></td></tr>`)}</tbody>
      </table></div>
      <div class="split"></div><div class="details"></div>
      <div class="status">夹 和 2,484</div><div class="foot"></div>
    </section>`;
  }

  private rarWindow() {
    return html`<section class="win rar">
      <div class="title">${ico("rar")}<span>yun.zip</span>
        <div class="caps">
          <button aria-label="最小化"><svg width="32" height="28"><path d="M9 19h12v4H9z"/></svg></button>
          <button aria-label="最大化"><svg width="32" height="28"><path d="M8 22h16M8 5v18M24 5v18" fill="none" stroke="#000" stroke-width="2"/><path d="M7 4h18v4H7z"/></svg></button>
          <button aria-label="关闭"><svg width="32" height="28"><path d="M9 6l14 14M23 6L9 20" stroke="#000" stroke-width="3"/></svg></button>
        </div>
      </div>
      <div class="menu">${["文件(F)", "命令(C)", "工具(S)", "收藏夹(O)", "选项(N)", "帮助(H)"].map((m) => html`<button>${m}</button>`)}</div>
      <div class="etch"><div class="etchIn">
        <div class="tools">
          ${tools.map((t) => html`${t.wide ? html`<i></i>` : nothing}<button class=${classMap({ wide: !!t.wide })}><svg width="88" height="72" viewBox="0 0 88 72" aria-hidden="true">${t.art}</svg>${t.label}</button>`)}
          <button class="chev" aria-label="更多"><svg width="18" height="14" viewBox="0 0 18 14"><path d="M2 1l5 5-5 5M10 1l5 5-5 5" fill="none" stroke="#000" stroke-width="3"/></svg></button>
        </div>
        <div class="path">
          <button class="up" aria-label="向上"><svg width="24" height="26" viewBox="0 0 24 26"><path d="M12 24V5M4 12L12 4L20 12" fill="none" stroke="#fff" stroke-width="6"/><path d="M12 24V5M4 12L12 4L20 12" fill="none" stroke="#8a8f8c" stroke-width="4"/></svg></button>
          <span class="grip"></span>
          <div class="combo">${ico("rar")}
            <select aria-label="路径"><option>yun.zip\\yunwei\\release_shell - ZIP 压缩文件, 解包大小为 18,207 字节</option></select>
            <span class="drop">${tri()}</span>
          </div>
        </div>
      </div></div>
      <div class="grid"><table>
        <colgroup><col width="240"><col width="160"><col width="160"><col width="240"><col width="224"><col></colgroup>
        <thead><tr><th><div class="cell">名称 ${sortMark}</div></th><th class="num">大小</th><th class="num">压缩后大小</th><th>类型</th><th>修改时间</th><th class="last">CRC32</th></tr></thead>
        <tbody>${archive.map(([i, n, s, p, t, d, c]) => html`<tr><td><div class="cell">${ico(i)}<span>${n}</span></div></td><td class="num">${s}</td><td class="num">${p}</td><td>${t}</td><td>${d}</td><td>${c}</td></tr>`)}</tbody>
      </table></div>
    </section>`;
  }

  private frontWindow() {
    return html`<section class="win front">
      <div class="title">${ico("folder")}楚国大爷</div>
      <div class="etch"><div class="etchIn nav">
        <svg width="130" height="56" viewBox="0 0 130 56" role="img" aria-label="后退 前进">
          <path d="M24 2H80Q108 6 108 28Q108 50 80 54H24Z" fill="#cbc8c5"/>
          <circle cx="27" cy="28" r="25" fill="url(#gBack)" stroke="#8b9299" stroke-width="2"/><path d="M13 28L25 16L29 20L24 25H41V31H24L29 36L25 40Z" fill="#fff"/>
          <circle cx="83" cy="28" r="24" fill="url(#gFwd)" stroke="#8d8b8a" stroke-width="2"/><path d="M97 28L85 16L81 20L86 25H69V31H86L81 36L85 40Z" fill="#f1efee" stroke="#c9c6c4"/>
          <path d="M114 24H128L121 33Z" fill="#f6f6fa" stroke="#85858f" stroke-width="2"/>
        </svg>
        <div class="crumbs">
          ${ico("folder")}<span class="step">${tri(true)}</span>
          <button>楚国大爷</button><span class="step">${tri(true)}</span>
          <button>楚国大爷</button><span class="step">${tri(true)}</span>
          <span class="push">${tri()}</span>
        </div>
      </div></div>
      <div class="bar">
        <button>组织 ${tri()}</button>
        <button class="open">${ico("rar")}打开</button><button class="more" aria-label="打开方式">${tri()}</button>
        <button class="burn">刻录</button><button>新建文件夹</button>
      </div>
      <div class="panes">
        <nav class="tree">${groups.map((g) => html`<ul>
          <li><a href="#">${ico(g.icon)}${g.label}</a></li>
          ${g.items.map(([i, l]) => html`<li class=${classMap({ sub: true, sel: l.includes("H:") })}><a href="#">${ico(i)}${l}</a></li>`)}
        </ul>`)}</nav>
        <div class="list"><table class="files">
          <thead><tr><th class="last"><div class="cell">名称 ${sortMark}</div></th></tr></thead>
          <tbody><tr class="spacer"><td></td></tr>
          ${folderList.map(([i, n]) => html`<tr class=${classMap({ sel: n === "yun.zip" })}><td><div class="cell">${ico(i)}${i === "link"
            ? html`<span class="clip">${n}</span><svg width="200" height="44" viewBox="0 0 200 44" aria-hidden="true"><path d="M12 0H136L122 3H16Z" fill="#0a246a"/><path d="M8 19h8v8h-8zM32 11h8v8h40v8h-40v-8h-8zM104 19h32v16h-8v-8h-16v8h-8zM152 19h8v16h-8zM176 19h8v16h-8zM192 19h8v8h-8z"/></svg>`
            : html`<span>${n}</span>`}</div></td></tr>`)}</tbody>
        </table></div>
      </div>
    </section>`;
  }

  render() {
    return html`${this.defs()}${this.backWindow()}${this.rarWindow()}${this.frontWindow()}
      <div class="note noteA">php85 站</div>
      <div class="note noteB">牛逼八爷站</div>
      <div class="mark">
        <svg width="54" height="48" viewBox="0 0 54 48" aria-hidden="true"><path d="M11 3Q27-2 42 3Q34 3 31 5Q37 14 36 20Q44 22 46 28Q50 26 52 18Q53 30 46 34Q46 42 38 47Q42 41 40 36Q32 36 27 32Q21 36 14 36Q12 41 16 47Q8 42 8 34Q0 30 1 22Q4 28 8 29Q10 22 18 20Q17 12 23 5Q19 3 11 3ZM27 11Q23 14 24 19H30Q31 14 27 11ZM16 25Q13 28 14 32H21Q20 27 16 25ZM38 25Q34 27 33 32H40Q41 28 38 25ZM27 24L23 29H31Z" fill="#e98080" fill-rule="evenodd"/></svg>
        <div><b>中國源碼</b><span>www.chinacode.com</span></div>
      </div>`;
  }
}
